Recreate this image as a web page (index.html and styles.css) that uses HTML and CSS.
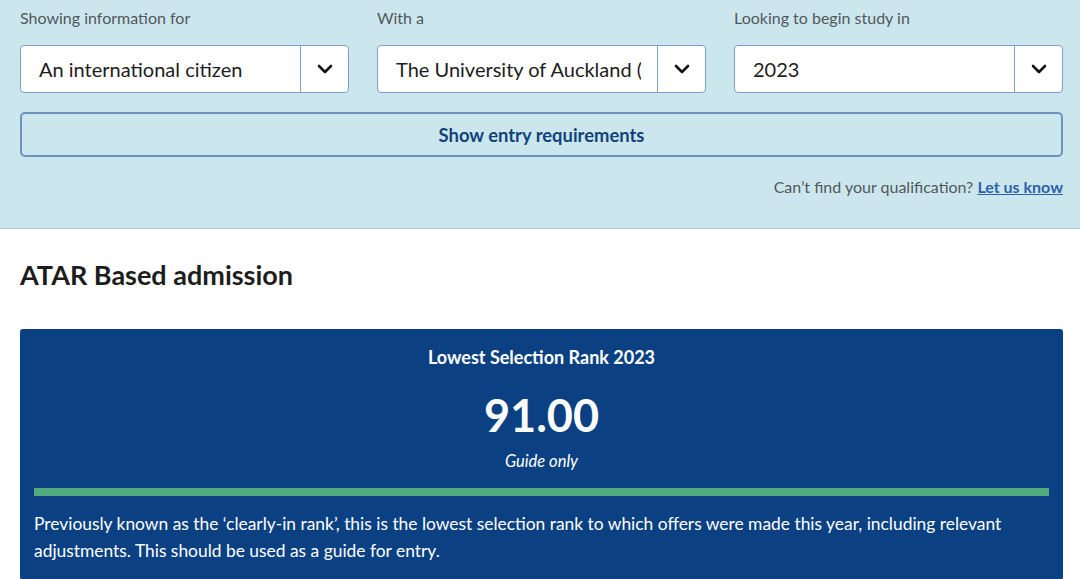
FILE: index.html
```html
<!DOCTYPE html>
<html lang="en">

<head>
    <meta charset="UTF-8">
    <meta name="viewport" content="width=device-width, initial-scale=1.0">
    <title>Entry requirements</title>
    <link rel="stylesheet" href="styles.css">
</head>

<body>
    <!-- Filter panel -->
    <div class="filter-panel">
        <div class="filter-row">
            <div class="filter-group">
                <label class="filter-label">Showing information for</label>
                <div class="select-box">
                    <span class="select-value">An international citizen</span>
                    <span class="select-arrow">
                        <svg width="16" height="10" viewBox="0 0 16 10"><path d="M2 2 L8 8 L14 2" fill="none" stroke="#111" stroke-width="2.6" stroke-linecap="round" stroke-linejoin="round"/></svg>
                    </span>
                </div>
            </div>
            <div class="filter-group">
                <label class="filter-label">With a</label>
                <div class="select-box">
                    <span class="select-value">The University of Auckland (UoA)</span>
                    <span class="select-arrow">
                        <svg width="16" height="10" viewBox="0 0 16 10"><path d="M2 2 L8 8 L14 2" fill="none" stroke="#111" stroke-width="2.6" stroke-linecap="round" stroke-linejoin="round"/></svg>
                    </span>
                </div>
            </div>
            <div class="filter-group">
                <label class="filter-label">Looking to begin study in</label>
                <div class="select-box">
                    <span class="select-value">2023</span>
                    <span class="select-arrow">
                        <svg width="16" height="10" viewBox="0 0 16 10"><path d="M2 2 L8 8 L14 2" fill="none" stroke="#111" stroke-width="2.6" stroke-linecap="round" stroke-linejoin="round"/></svg>
                    </span>
                </div>
            </div>
        </div>

        <button class="show-btn">Show entry requirements</button>

        <p class="help-text">Can’t find your qualification? <a href="#">Let us know</a></p>
    </div>

    <!-- Admission details -->
    <div class="content">
        <h2 class="section-title">ATAR Based admission</h2>

        <div class="rank-card">
            <h3 class="rank-title">Lowest Selection Rank 2023</h3>
            <div class="rank-value">91.00</div>
            <p class="rank-note">Guide only</p>
            <div class="rank-bar"></div>
            <p class="rank-desc">Previously known as the ‘clearly-in rank’, this is the lowest selection rank to which offers were made this year, including relevant adjustments. This should be used as a guide for entry.</p>
        </div>
    </div>
</body>

</html>
```

FILE: styles.css
```css
/* Global Styles */
:root {
    --panel-color: #cbe7ed;
    --navy: #0b4182;
    --border-blue: #7d9fc8;
    --text-dark: #1d1d1d;
    --text-grey: #52575c;
    --green: #52ab7c;
}

* {
    margin: 0;
    padding: 0;
    box-sizing: border-box;
    font-family: 'Lato', 'Noto Sans', sans-serif;
}

body {
    background-color: #fff;
    color: var(--text-dark);
}

/* Filter panel */
.filter-panel {
    background-color: var(--panel-color);
    border-bottom: 1px solid #abcbe0;
    padding: 8px 17px 30px 20px;
    height: 229px;
}

.filter-row {
    display: grid;
    grid-template-columns: repeat(3, 329px);
    column-gap: 28px;
}

.filter-label {
    display: block;
    font-size: 16px;
    color: var(--text-grey);
    line-height: 20px;
    margin-bottom: 17px;
}

.select-box {
    display: flex;
    height: 48px;
    background: #fff;
    border: 1px solid var(--border-blue);
    border-radius: 4px;
}

.select-value {
    flex: 1;
    min-width: 0;
    margin: 0 16px 0 18px;
    font-size: 20px;
    line-height: 46px;
    white-space: nowrap;
    overflow: hidden;
    text-overflow: clip;
    color: var(--text-dark);
}

.select-arrow {
    width: 48px;
    flex-shrink: 0;
    border-left: 1px solid var(--border-blue);
    display: flex;
    align-items: center;
    justify-content: center;
}

.show-btn {
    display: block;
    width: 1043px;
    height: 45px;
    margin-top: 19px;
    background: transparent;
    border: 2px solid #6a94bd;
    border-radius: 5px;
    color: #12427a;
    font-size: 18.4px;
    font-weight: 700;
    cursor: pointer;
}

.help-text {
    width: 1043px;
    text-align: right;
    margin-top: 20px;
    font-size: 16px;
    line-height: 20px;
    color: var(--text-grey);
}

.help-text a {
    color: #2c62a8;
    font-weight: 700;
    text-decoration: underline;
}

/* Admission details */
.content {
    padding: 29px 17px 0 20px;
}

.section-title {
    font-size: 27px;
    font-weight: 700;
    line-height: 34px;
    color: var(--text-dark);
}

.rank-card {
    width: 1043px;
    margin-top: 37px;
    background-color: var(--navy);
    border-radius: 3px;
    padding: 16px 14px 16px 14px;
    color: #fff;
    text-align: center;
}

.rank-title {
    font-size: 18px;
    font-weight: 700;
    line-height: 24px;
}

.rank-value {
    font-size: 45px;
    font-weight: 700;
    line-height: 52px;
    margin-top: 20px;
}

.rank-note {
    font-size: 16.5px;
    font-style: italic;
    line-height: 20px;
    margin-top: 10px;
}

.rank-bar {
    height: 8px;
    background-color: var(--green);
    margin-top: 17px;
}

.rank-desc {
    text-align: left;
    font-size: 17.4px;
    line-height: 27px;
    margin-top: 14px;
}
```
